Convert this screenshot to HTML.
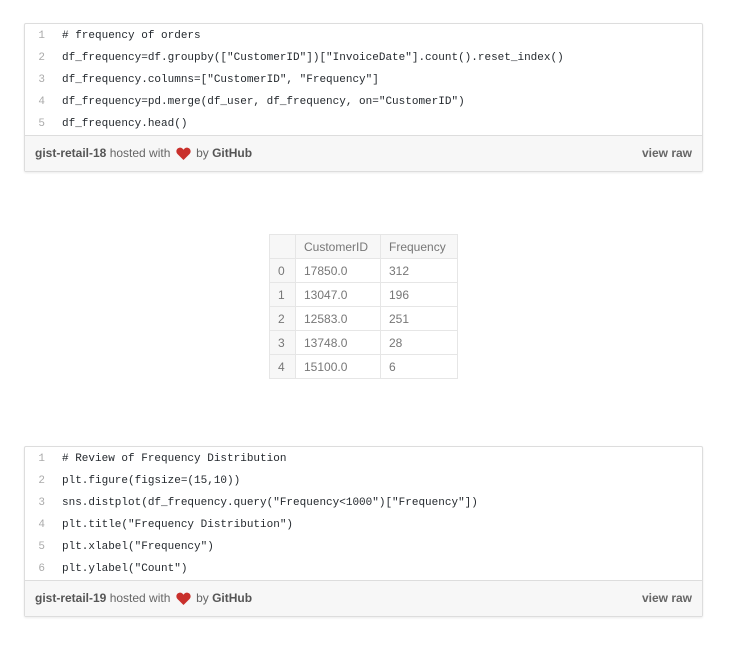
<!DOCTYPE html>
<html><head><style>
body{margin:0;background:#fff;width:739px;height:645px;position:relative;font-family:"Liberation Sans",sans-serif}
.gist{position:absolute;left:24px;width:677px;border:1px solid #ddd;border-radius:2px;background:#fff;box-shadow:0 1px 2px rgba(0,0,0,.08)}
.code{padding:1px 0 0 0}
.ln{height:22px;line-height:22px;font-family:"Liberation Mono",monospace;font-size:11px;color:#24292e;white-space:pre}
.ln span{display:inline-block;width:20px;text-align:right;color:#aaa;margin-right:17px}
.foot{background:#f7f7f7;border-top:1px solid #ddd;height:35px;line-height:35px;padding:0 10px;font-size:12px;color:#666;position:relative}
.foot b{color:#555}
.foot .raw{position:absolute;right:10px;top:0;font-weight:bold;color:#666}
.heart{display:inline-block;vertical-align:-3px;margin:0 2px}
table{position:absolute;left:269px;top:234px;border-collapse:collapse;font-size:12px;color:#777}
td{border:1px solid #e6e6e6;height:23px;padding:0 8px}
tr:first-child td{background:#f7f7f7}
td:first-child{background:#f7f7f7;width:9px;text-align:left}
</style></head><body>
<div class="gist" style="top:23px">
<div class="code">
<div class="ln"><span>1</span># frequency of orders</div>
<div class="ln"><span>2</span>df_frequency=df.groupby(["CustomerID"])["InvoiceDate"].count().reset_index()</div>
<div class="ln"><span>3</span>df_frequency.columns=["CustomerID", "Frequency"]</div>
<div class="ln"><span>4</span>df_frequency=pd.merge(df_user, df_frequency, on="CustomerID")</div>
<div class="ln"><span>5</span>df_frequency.head()</div>
</div>
<div class="foot"><b>gist-retail-18</b> hosted with <svg class="heart" width="15" height="13" viewBox="0 0 16 14"><path d="M8 14L1.5 7.5C-.5 5.5 0 1.5 3.5 .8 5.5.4 7 1.5 8 3 9 1.5 10.5.4 12.5.8 16 1.5 16.5 5.5 14.5 7.5Z" fill="#c9302c"/></svg> by <b>GitHub</b><span class="raw">view raw</span></div>
</div>
<table>
<tr><td></td><td style="width:68px">CustomerID</td><td style="width:60px">Frequency</td></tr>
<tr><td>0</td><td>17850.0</td><td>312</td></tr>
<tr><td>1</td><td>13047.0</td><td>196</td></tr>
<tr><td>2</td><td>12583.0</td><td>251</td></tr>
<tr><td>3</td><td>13748.0</td><td>28</td></tr>
<tr><td>4</td><td>15100.0</td><td>6</td></tr>
</table>
<div class="gist" style="top:446px">
<div class="code">
<div class="ln"><span>1</span># Review of Frequency Distribution</div>
<div class="ln"><span>2</span>plt.figure(figsize=(15,10))</div>
<div class="ln"><span>3</span>sns.distplot(df_frequency.query("Frequency&lt;1000")["Frequency"])</div>
<div class="ln"><span>4</span>plt.title("Frequency Distribution")</div>
<div class="ln"><span>5</span>plt.xlabel("Frequency")</div>
<div class="ln"><span>6</span>plt.ylabel("Count")</div>
</div>
<div class="foot"><b>gist-retail-19</b> hosted with <svg class="heart" width="15" height="13" viewBox="0 0 16 14"><path d="M8 14L1.5 7.5C-.5 5.5 0 1.5 3.5 .8 5.5.4 7 1.5 8 3 9 1.5 10.5.4 12.5.8 16 1.5 16.5 5.5 14.5 7.5Z" fill="#c9302c"/></svg> by <b>GitHub</b><span class="raw">view raw</span></div>
</div>
</body></html>
